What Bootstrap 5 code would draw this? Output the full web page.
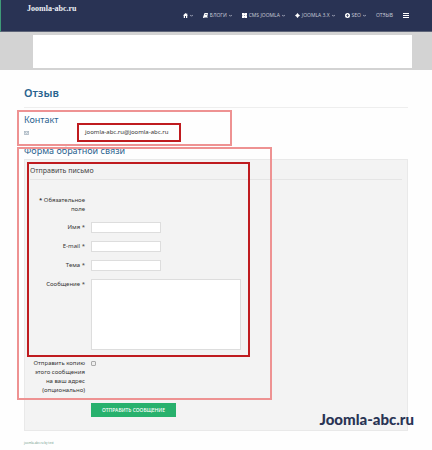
<!DOCTYPE html>
<html lang="ru">
<head>
<meta charset="utf-8">
<meta name="viewport" content="width=device-width, initial-scale=1">
<title>Отзыв</title>
<link href="https://cdn.jsdelivr.net/npm/bootstrap@5.3.0/dist/css/bootstrap.min.css" rel="stylesheet">
<style>
body{font-family:"Noto Sans","Open Sans",sans-serif;font-size:6px;line-height:9px;color:#333;background:#fefefe}
.topbar{height:32px;background:#293354;border-left:1px solid #3f9a78;border-bottom:1px solid #5d6478;padding:0 23px 0 26px}
.site-name{font:bold 8px/10px "Liberation Serif",serif;color:#eef0f6;padding-top:4px}
.menu{gap:10px;padding-top:11px;font-family:"Open Sans",sans-serif;font-size:5px;line-height:9px}
.menu a{color:#c9cedb;gap:2px}
.menu svg{width:5px;height:5px;fill:#fff}
.menu .caret{width:3px;height:3px;fill:none;stroke:#c9cedb;stroke-width:1}
.menu .burger{width:6px;height:6px}
.banner{background:#d3d3d3;padding:3px 20px 2px 33px}
.banner div{height:33px;background:#fff}
.content-area{padding:0 24px}
h1,h2{font-weight:400;color:#2a638f;margin:0}
h1{font-size:11px;line-height:16px;font-weight:600;padding:15px 0 6px;border-bottom:1px solid #eee}
h2{font-size:9px;line-height:12px}
.contact{padding-top:6px;height:37px}
.contact .mail-row{padding-top:2px}
.mail-row svg{width:5px;height:4px}
.mail-row a{color:#333;margin-left:56px}
.panel{background:#f3f3f3;border:1px solid #e9e9e9;padding:6px 5px 13px;margin-top:2px}
legend{font-size:7px;line-height:10px;color:#444;padding-bottom:3px;margin:0 0 15px;border-bottom:1px solid #e5e5e5}
.field{display:grid;grid-template-columns:55px 1fr;column-gap:6px;margin-bottom:8px;align-items:start}
.field>label,.field>.note{text-align:right;line-height:9px;padding-top:1px}
.form-control{border:1px solid #ddd;border-radius:0;background:#fff;padding:0 2px;font-size:6px;min-height:0}
input.form-control{width:70px;height:11px}
textarea.form-control{width:150px;height:71px;resize:none}
.field .tick{width:5px;height:5px;margin:3px 0 0 0;border:1px solid #aaa;border-radius:1px;background:#eee;appearance:none}
.send{margin-left:61px;width:85px;height:14px;padding:0;border:0;border-radius:0;background:#28b16d;color:#fff;font-family:"Noto Sans",sans-serif;font-size:5px;font-weight:500;line-height:14px}
.frame{position:absolute;pointer-events:none;border:2px solid #ee9292}
.frame.strong{border-color:#bf1b1f}
.frame-contact{left:-7px;top:2px;width:215px;height:36px}
.frame-mail{left:53px;top:15px;width:104px;height:19px}
.frame-section{left:-7px;top:2px;width:255px;height:253px}
.frame-form{left:3px;top:17px;width:223px;height:195px}
.watermark{position:absolute;right:-6px;bottom:3px;font:900 15px/18px Lato,sans-serif;color:#293354}
.foot{font-size:3px;line-height:5px;color:#6e9b8b;padding-top:10px}
</style>
<script src="https://cdn.jsdelivr.net/npm/bootstrap@5.3.0/dist/js/bootstrap.bundle.min.js"></script>
</head>
<body>
<header class="topbar d-flex justify-content-between align-items-start">
  <a class="site-name text-decoration-none" href="#">Joomla-abc.ru</a>
  <nav class="menu d-flex">
    <a class="d-flex align-items-center text-decoration-none" href="#" aria-label="Главная"><svg viewBox="0 0 10 10"><path d="M5 0 0 5h1.500v5H4V6h2v4h2.500V5H10L8.500 3.500V1H7v1z"/></svg><svg class="caret" viewBox="0 0 4 4"><path d="M0 1l2 2 2-2"/></svg></a>
    <a class="d-flex align-items-center text-decoration-none" href="#"><svg viewBox="0 0 10 10"><path d="M3 0h7L8 8H2.500v.8H8.500L10 3v1L9 10H1Q0 10 0 8.500zM4 2v1h4V2z"/></svg>БЛОГИ<svg class="caret" viewBox="0 0 4 4"><path d="M0 1l2 2 2-2"/></svg></a>
    <a class="d-flex align-items-center text-decoration-none" href="#"><svg viewBox="0 0 10 10"><path fill-rule="evenodd" d="M0 0h4l1 1 1-1h4v4L9 5l1 1v4H6L5 9l-1 1H0V6l1-1-1-1zM5 4 4 5l1 1 1-1z"/></svg>CMS JOOMLA<svg class="caret" viewBox="0 0 4 4"><path d="M0 1l2 2 2-2"/></svg></a>
    <a class="d-flex align-items-center text-decoration-none" href="#"><svg viewBox="0 0 10 10"><path d="M5 0l2.500 3H6.500v.5H7V2.500L10 5 7 7.500v-1h-.5v.5h1L5 10 2.500 7h1v-.5H3v1L0 5l3-2.500v1h.5V3h-1z"/></svg>JOOMLA 3.X<svg class="caret" viewBox="0 0 4 4"><path d="M0 1l2 2 2-2"/></svg></a>
    <a class="d-flex align-items-center text-decoration-none" href="#"><svg viewBox="0 0 10 10"><path fill-rule="evenodd" d="M5 0a5 5 0 1 0 0 10A5 5 0 0 0 5 0zM4.300 2h1.400v2.300H8v1.400H5.700V8H4.300V5.700H2V4.300h2.300z"/></svg>SEO<svg class="caret" viewBox="0 0 4 4"><path d="M0 1l2 2 2-2"/></svg></a>
    <a class="d-flex align-items-center text-decoration-none" href="#">ОТЗЫВ</a>
    <a class="d-flex align-items-center" href="#" aria-label="Меню"><svg class="burger" viewBox="0 0 6 6"><path d="M0 0h6v1H0zM0 2h6v1H0zM0 4h6v1H0z"/></svg></a>
  </nav>
</header>
<div class="banner"><div></div></div>
<main class="content-area">
  <h1>Отзыв</h1>
  <section class="contact position-relative">
    <h2>Контакт</h2>
    <div class="mail-row d-flex align-items-center">
      <svg viewBox="0 0 5 4"><path fill="#dfe5ea" stroke="#8fa0ae" stroke-width=".6" d="M.3.500h4.400v3H.3zM.3.500l2.200 1.700L4.700.500"/></svg>
      <a class="text-decoration-none" href="mailto:joomla-abc.ru@joomla-abc.ru">joomla-abc.ru@joomla-abc.ru</a>
    </div>
    <div class="frame frame-contact"></div>
    <div class="frame strong frame-mail"></div>
  </section>
  <section class="position-relative">
    <h2>Форма обратной связи</h2>
    <form class="panel">
      <fieldset>
        <legend>Отправить письмо</legend>
        <div class="field"><div class="note"><b>*</b> Обязательное поле</div></div>
        <div class="field"><label for="name">Имя *</label><input class="form-control" id="name" type="text"></div>
        <div class="field"><label for="email">E-mail *</label><input class="form-control" id="email" type="email"></div>
        <div class="field"><label for="subject">Тема *</label><input class="form-control" id="subject" type="text"></div>
        <div class="field"><label for="message">Сообщение *</label><textarea class="form-control" id="message"></textarea></div>
        <div class="field"><label for="copy">Отправить копию этого сообщения на ваш адрес (опционально)</label><input class="tick" id="copy" type="checkbox"></div>
      </fieldset>
      <button class="btn send d-block" type="submit">ОТПРАВИТЬ СООБЩЕНИЕ</button>
    </form>
    <div class="frame frame-section"></div>
    <div class="frame strong frame-form"></div>
    <div class="watermark">Joomla-abc.ru</div>
  </section>
  <footer class="foot">joomla-abc.ru by test</footer>
</main>
</body>
</html>
